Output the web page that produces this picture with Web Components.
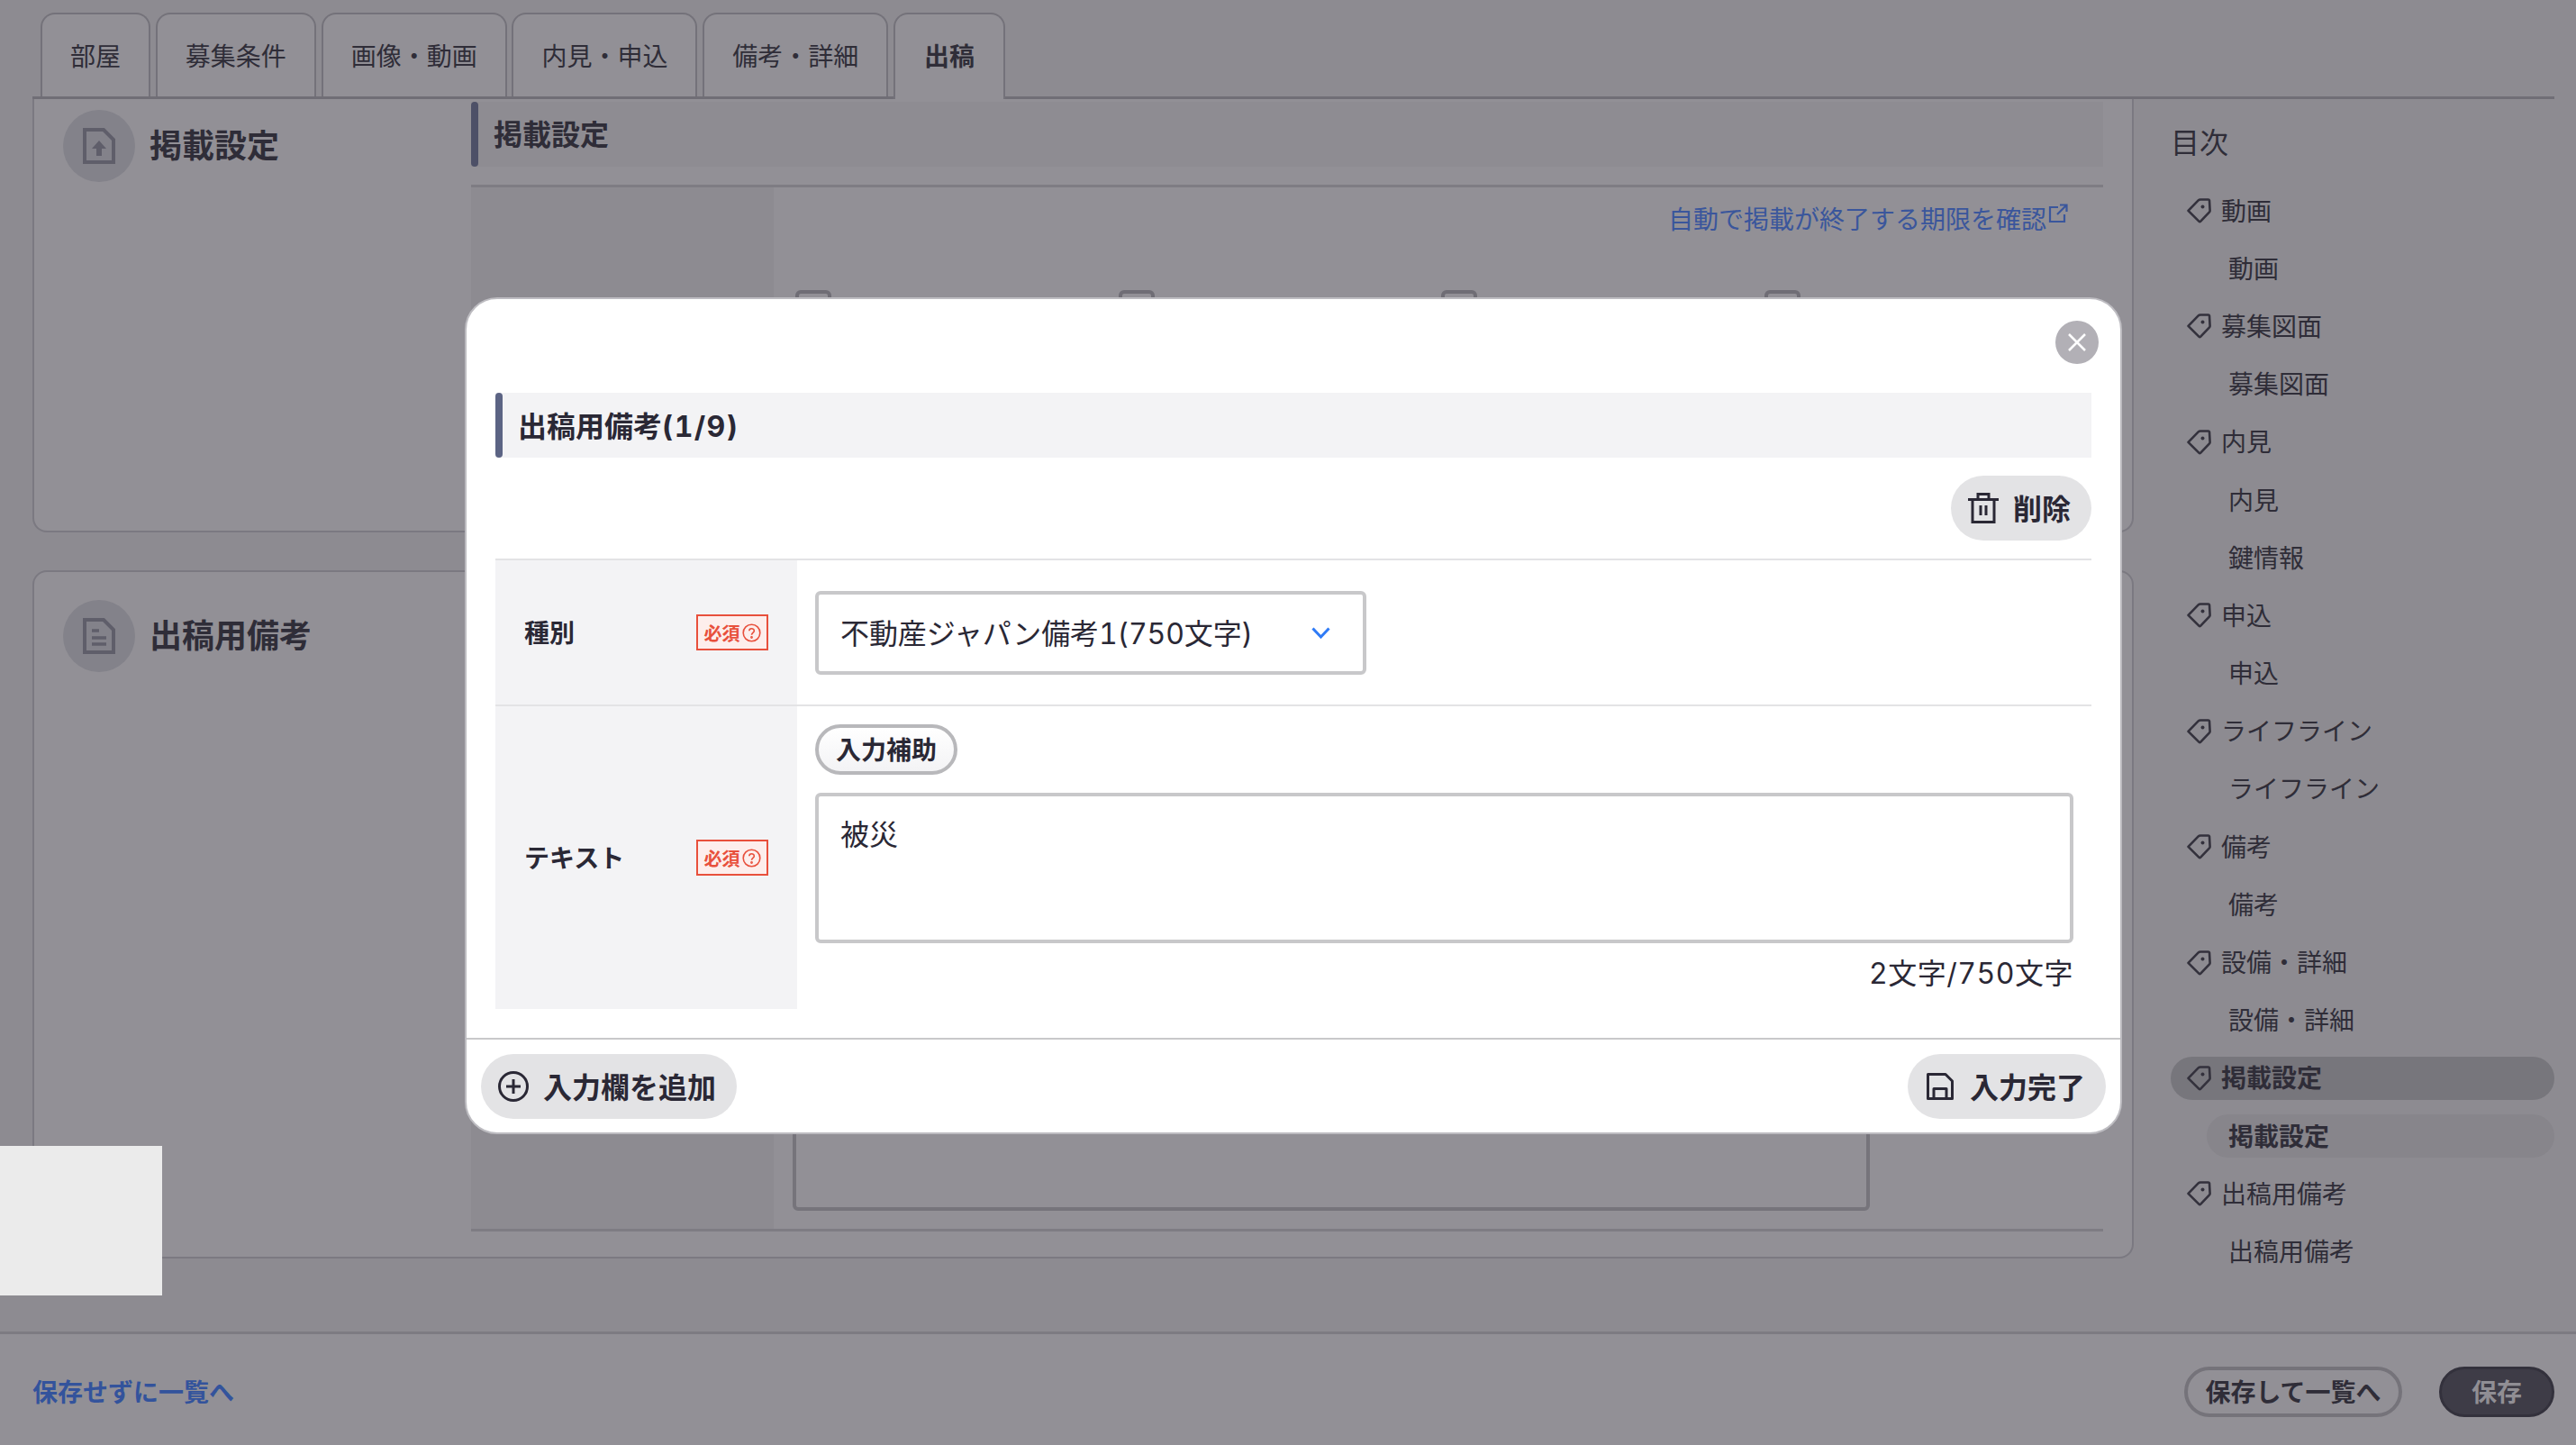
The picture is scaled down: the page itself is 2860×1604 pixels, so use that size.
<!DOCTYPE html>
<html lang="ja"><head><meta charset="utf-8"><title>出稿</title>
<style>
html,body{margin:0;padding:0;width:2860px;height:1604px;overflow:hidden;background:#8d8b91}
body{font-family:Inter,"Noto Sans CJK JP",sans-serif;color:#2c2a36;font-variant-numeric:tabular-nums}
</style></head><body>
<x-app>
  <x-tabs>
    <x-tab>部屋</x-tab><x-tab>募集条件</x-tab><x-tab>画像・動画</x-tab><x-tab>内見・申込</x-tab><x-tab>備考・詳細</x-tab><x-tab active>出稿</x-tab>
  </x-tabs>
  <x-main>
    <x-panels>
      <x-panel style="height:481px" class="first">
        <x-panel-title kind="upload">掲載設定</x-panel-title>
        <x-listing-section></x-listing-section>
      </x-panel>
      <x-panel style="height:764px;margin-top:42px">
        <x-panel-title kind="text">出稿用備考</x-panel-title>
        <x-remark-section></x-remark-section>
      </x-panel>
    </x-panels>
    <x-toc>
      <x-toc-title>目次</x-toc-title>
      <x-toc-item>動画</x-toc-item><x-toc-item sub>動画</x-toc-item>
      <x-toc-item>募集図面</x-toc-item><x-toc-item sub>募集図面</x-toc-item>
      <x-toc-item>内見</x-toc-item><x-toc-item sub>内見</x-toc-item><x-toc-item sub>鍵情報</x-toc-item>
      <x-toc-item>申込</x-toc-item><x-toc-item sub>申込</x-toc-item>
      <x-toc-item>ライフライン</x-toc-item><x-toc-item sub>ライフライン</x-toc-item>
      <x-toc-item>備考</x-toc-item><x-toc-item sub>備考</x-toc-item>
      <x-toc-item>設備・詳細</x-toc-item><x-toc-item sub>設備・詳細</x-toc-item>
      <x-toc-item active>掲載設定</x-toc-item><x-toc-item sub active>掲載設定</x-toc-item>
      <x-toc-item>出稿用備考</x-toc-item><x-toc-item sub>出稿用備考</x-toc-item>
    </x-toc>
  </x-main>
  <x-footer></x-footer>
  <x-corner-box></x-corner-box>
  <x-modal></x-modal>
</x-app>
<script>
function def(name, html){
  customElements.define(name, class extends HTMLElement{
    constructor(){super();this.attachShadow({mode:'open'}).innerHTML=html;}
  });
}
const ICONS={
 trash:'<svg width="34" height="34" viewBox="0 0 34 34" fill="none" stroke="currentColor" stroke-width="3"><path d="M0 7.500H34M5 7.500V32.500H29V7.500M11 7.500V1.500H23V7.500M14 14V25M20 14V25"/></svg>',
 plus:'<svg width="34" height="34" viewBox="0 0 34 34" fill="none" stroke="currentColor" stroke-width="3"><circle cx="17" cy="17" r="15.500"/><path d="M17 9V25M9 17H25"/></svg>',
 save:'<svg width="30" height="30" viewBox="0 0 30 30" fill="none" stroke="currentColor" stroke-width="3" stroke-linejoin="round"><path d="M1.500 1.500H21L28.500 9V28.500H1.500Z"/><path d="M8 28.500V17.500H22V28.500"/></svg>'
};
def('x-app',`<style>:host{display:flex;flex-direction:column;position:relative;width:2860px;height:1604px;background:#8d8b91;overflow:hidden}</style><slot></slot>`);
def('x-tabs',`<style>:host{display:flex;gap:5.8px;height:93px;box-sizing:content-box;padding:14px 0 0 9px;margin:0 24px 0 36px;border-bottom:3px solid #706e76;flex:none}</style><slot></slot>`);
def('x-tab',`<style>
:host{display:flex;align-items:center;justify-content:center;box-sizing:border-box;height:93px;padding:0 31px 2px;border:2px solid #74727a;border-bottom:0;border-radius:16px 16px 0 0;background:#929096;font-size:28px;color:#2f2d38;white-space:nowrap}
:host([active]){height:96px;padding:0 32px 5px;font-weight:700;position:relative;z-index:1}
</style><slot></slot>`);
def('x-main',`<style>:host{display:flex;flex:1;min-height:0;padding-left:36px}</style><slot></slot>`);
def('x-panels',`<style>:host{display:block;width:2333px;flex:none}</style><slot></slot>`);
def('x-panel',`<style>
:host{display:flex;box-sizing:border-box;background:#929096;border:2px solid #7b7981;border-radius:16px;padding-right:32px}
:host(.first){border-top:0;border-radius:0 0 16px 16px}
</style><slot></slot>`);
const docIcons={
 upload:'<path d="M2 2H23L34 13V38H2Z" fill="none" stroke="#5f5e6a" stroke-width="4"/><path d="M18 14L26 23H21V31H15V23H10Z" fill="#5f5e6a"/>',
 text:'<path d="M2 2H23L34 13V38H2Z" fill="none" stroke="#5f5e6a" stroke-width="4"/><path d="M10 14H18M10 22H26M10 29H26" stroke="#5f5e6a" stroke-width="3.500"/>'
};
customElements.define('x-panel-title',class extends HTMLElement{
  constructor(){super();this.attachShadow({mode:'open'}).innerHTML=`<style>
  :host{display:flex;align-items:center;gap:18px;width:485px;box-sizing:border-box;height:80px;padding-left:32px;margin-top:12px;font-size:36px;font-weight:700;color:#2f2d38;flex:none}
  :host([kind=text]){margin-top:31px}
  .c{width:80px;height:80px;border-radius:50%;background:#83828a;display:flex;align-items:center;justify-content:center;flex:none}
  .t{padding-bottom:6px;margin-left:-2px}
  </style><span class="c"><svg width="36" height="40" viewBox="0 0 36 40">${docIcons[this.getAttribute('kind')]}</svg></span><span class="t"><slot></slot></span>`;}
});
def('x-listing-section',`<style>
:host{display:block;flex:1;min-width:0;padding-top:3px}
.bar{position:relative;box-sizing:border-box;height:72px;background:#8e8c92;display:flex;align-items:center;padding:0 0 5px 25px;font-size:32px;font-weight:700;color:#2f2d38}
.bar::before{content:"";position:absolute;left:0;top:0;bottom:0;width:8px;border-radius:4px;background:#4d5067}
.tbl{margin-top:20px;border-top:3px solid #7e7c83;display:flex;height:380px}
.lab{width:336px;background:#8d8b91;flex:none}
.val{flex:1;min-width:0;padding:0 39px 0 24px}
.link{display:flex;justify-content:flex-end;align-items:center;gap:2px;font-size:28px;color:#3a569c;height:64px;padding-top:3px;box-sizing:border-box}
.checks{display:grid;grid-template-columns:repeat(3,358.6px) 1fr;margin-top:50px}
.cb{width:40px;height:40px;box-sizing:border-box;border:4px solid #6f6d75;border-radius:6px}
</style>
<div class="bar">掲載設定</div>
<div class="tbl"><div class="lab"></div><div class="val">
<div class="link"><span>自動で掲載が終了する期限を確認</span><svg width="22" height="22" viewBox="0 0 22 22" fill="none" stroke="#3a569c" stroke-width="2.200" style="margin-top:-10px"><path d="M11 4H2V20H18V12M10 12L20 2M13 1.500H20.500V9"/></svg></div>
<div class="checks"><div class="cb"></div><div class="cb"></div><div class="cb"></div><div class="cb"></div></div>
</div></div>`);
def('x-remark-section',`<style>
:host{display:flex;flex-direction:column;justify-content:flex-end;flex:1;min-width:0;padding-bottom:28px}
.tbl{border-bottom:3px solid #7e7c83;display:flex;height:640px}
.lab{width:336px;background:#8d8b91;flex:none}
.val{flex:1;min-width:0;padding:0 259px 20px 21px;display:flex;flex-direction:column;justify-content:flex-end}
.ta{height:220px;box-sizing:border-box;border:4px solid #76747b;border-radius:6px}
</style><div class="tbl"><div class="lab"></div><div class="val"><div class="ta"></div></div></div>`);
def('x-toc',`<style>:host{display:flex;flex-direction:column;gap:16px;flex:1;padding:0 24px 0 41px;box-sizing:border-box}</style><slot></slot>`);
def('x-toc-title',`<style>:host{display:block;font-size:32px;line-height:40px;padding:29px 0 15px 0;color:#2f2d38}</style><slot></slot>`);
def('x-toc-item',`<style>
:host{display:flex;align-items:center;gap:11px;box-sizing:border-box;height:48.2px;padding-left:18px;border-radius:24px;font-size:28px;color:#2f2d38;white-space:nowrap}
:host([sub]){margin-left:40px;padding-left:24px}
:host([sub]) svg{display:none}
:host([active]){background:#77767c;font-weight:700}
:host([sub][active]){background:#87858b}
span{padding-bottom:3px}
</style><svg width="27" height="28" viewBox="0 0 27 28" fill="none" stroke="#33313c" stroke-width="2.600" stroke-linejoin="round"><path d="M1.500 13.800L12.700 2.400Q13.600 1.500 15 1.500H23.800Q24.800 1.500 25 2.500L25.600 14Q25.600 14.800 25 15.300L15 25.800Q14.300 26.400 13.600 25.800Z"/><circle cx="17.500" cy="9.500" r="2" fill="#33313c" stroke="none"/></svg><span><slot></slot></span>`);
def('x-footer',`<style>
:host{display:flex;align-items:center;justify-content:space-between;box-sizing:border-box;flex:none;height:126px;border-top:3px solid #7d7b82;background:#929096;padding:4px 24px 0 36px}
.back{font-size:28px;font-weight:700;color:#33539c;white-space:nowrap;padding-bottom:2px}
.r{display:flex;gap:41px}
.b{height:56px;box-sizing:border-box;border-radius:28px;display:flex;align-items:center;justify-content:center;font-size:28px;font-weight:700;white-space:nowrap;padding-bottom:2px}
.o{width:242px;border:4px solid #75737a;color:#2f2d38}
.s{width:128px;background:#3e3c47;border:3px solid #33313c;color:#908e94}
</style><span class="back">保存せずに一覧へ</span><div class="r"><div class="b o">保存して一覧へ</div><div class="b s">保存</div></div>`);
def('x-corner-box',`<style>:host{display:block;position:absolute;left:0;top:1272px;width:180px;height:166px;background:#ebebeb}</style>`);
def('x-badge',`<style>
:host{display:flex;align-items:center;justify-content:center;gap:2px;box-sizing:border-box;width:80px;height:40px;border:2px solid #e8503c;background:#fdeeec;color:#e8503c;font-size:20px;font-weight:700;white-space:nowrap;flex:none}
</style><slot></slot><svg width="21" height="21" viewBox="0 0 21 21" fill="none" stroke="#e8503c" stroke-width="1.600"><circle cx="10.500" cy="10.500" r="9.300"/><path d="M7.800 8.300C7.800 4.900 13.300 4.900 13.300 8.200C13.300 10.300 10.500 10.500 10.500 12.800"/><circle cx="10.500" cy="15.500" r=".6"/></svg>`);
def('x-field',`<style>
:host{display:flex;border-bottom:2px solid #e3e3e5;box-sizing:border-box}
.l{width:335px;flex:none;box-sizing:border-box;background:#f3f3f5;display:flex;align-items:center;justify-content:space-between;padding:0 32px 0 32px;font-size:28px;font-weight:700}
.v{flex:1;min-width:0;box-sizing:border-box;padding:0 20px 0 20px}
</style><div class="l"><slot name="label"></slot></div><div class="v"><slot></slot></div>`);
def('x-select',`<style>
:host{display:flex;align-items:center;justify-content:space-between;box-sizing:border-box;width:612px;height:93px;border:4px solid #c8c8ca;border-radius:6px;padding:0 36px 0 24px;font-size:32px;letter-spacing:-.12px;color:#2a2835;background:#fff;white-space:nowrap}
span{padding-bottom:3px}
</style><span><slot></slot></span><svg width="21" height="13" viewBox="0 0 21 13" fill="none" stroke="#2f7bf6" stroke-width="3"><path d="M1.500 1.500L10.500 11L19.500 1.500"/></svg>`);
def('x-assist',`<style>
:host{display:inline-flex;align-items:center;justify-content:center;box-sizing:border-box;width:158px;height:56px;padding-bottom:2px;border:4px solid #b8b8bb;border-radius:28px;background:linear-gradient(#fff,#f3f3f5);font-size:28px;font-weight:700;white-space:nowrap}
</style><slot></slot>`);
def('x-textarea',`<style>
:host{display:block;box-sizing:border-box;height:167px;margin-top:20px;border:4px solid #c8c8ca;border-radius:6px;padding:21px 24px;font-size:32px;line-height:44px;color:#2a2835}
</style><slot></slot>`);
def('x-pill',`<style>
:host{display:inline-flex;align-items:center;box-sizing:border-box;height:72px;border-radius:36px;background:#e3e3e5;font-size:32px;font-weight:700;white-space:nowrap;color:#2a2835}
::slotted(span){padding-bottom:3px}
::slotted(svg){flex:none}
</style><slot></slot>`);
def('x-modal',`<style>
:host{display:flex;flex-direction:column;position:absolute;left:516px;top:330px;width:1840px;height:929px;box-sizing:border-box;background:#fff;border:2px solid #bdbcc1;border-radius:36px;color:#2a2835;overflow:hidden}
.body{padding:104px 32px 0;height:820px;box-sizing:border-box;flex:none}
.close{position:absolute;left:1764px;top:24px;width:48px;height:48px;border-radius:50%;background:#b2b0b6;display:flex;align-items:center;justify-content:center}
.head{position:relative;box-sizing:border-box;height:72px;background:#f3f3f5;display:flex;align-items:center;padding:0 0 3px 25px;font-size:32px;font-weight:700;white-space:pre}
.head::before{content:"";position:absolute;left:0;top:0;bottom:0;width:8px;border-radius:4px;background:#5c6484}
.ct{letter-spacing:1.3px}
.acts{display:flex;justify-content:flex-end;padding:20px 0}
.tbl{border-top:2px solid #e3e3e5}
.r1{height:162px}.r2{height:336px;border-bottom:0}
.c1{display:flex;align-items:center;height:160px}
.c2{padding-top:20px}
.lbl{padding-bottom:3px}
.count{text-align:right;font-size:32px;line-height:44px;margin-top:12px;letter-spacing:.5px}
.foot{flex:1;border-top:2px solid #c8c8ca;display:flex;justify-content:space-between;align-items:flex-start;padding:16px 16px 0}
</style>
<div class="close"><svg width="20" height="20" viewBox="0 0 20 20" stroke="#fff" stroke-width="2.500"><path d="M1 1L19 19M19 1L1 19"/></svg></div>
<div class="body">
  <div class="head"><span>出稿用備考<span class="ct">(1/9)</span></span></div>
  <div class="acts"><x-pill style="padding:0 23px 0 19px">${ICONS.trash}<span style="margin-left:16px">削除</span></x-pill></div>
  <div class="tbl">
    <x-field class="r1"><span class="lbl" slot="label">種別</span><x-badge slot="label">必須</x-badge>
      <div class="c1"><x-select>不動産ジャパン備考1(750文字)</x-select></div></x-field>
    <x-field class="r2"><span class="lbl" slot="label">テキスト</span><x-badge slot="label">必須</x-badge>
      <div class="c2"><x-assist>入力補助</x-assist><x-textarea>被災</x-textarea><div class="count">2文字/750文字</div></div></x-field>
  </div>
</div>
<div class="foot">
  <x-pill style="padding:0 23px 0 19px">${ICONS.plus}<span style="margin-left:16px">入力欄を追加</span></x-pill>
  <x-pill style="padding:0 23px 0 21px">${ICONS.save}<span style="margin-left:18px">入力完了</span></x-pill>
</div>`);
</script>
</body></html>
